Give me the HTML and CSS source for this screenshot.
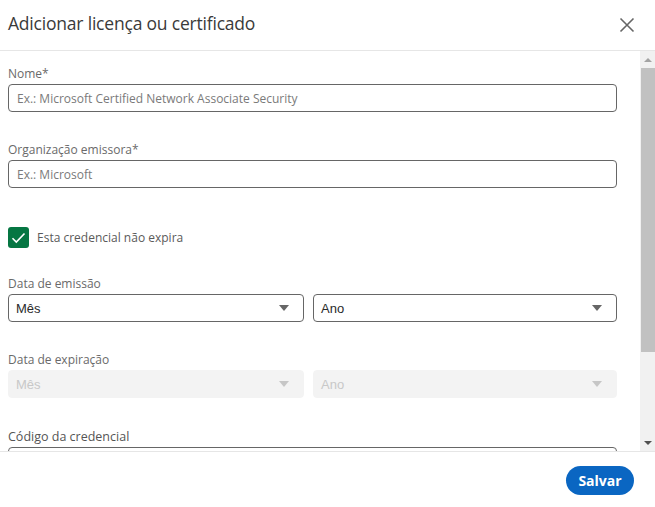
FILE: index.html
```html
<!DOCTYPE html>
<html lang="pt">
<head>
<meta charset="utf-8">
<title>Adicionar licença ou certificado</title>
<link rel="stylesheet" href="styles.css">
</head>
<body>
<div class="dialog">
  <header class="header">
    <h1 class="title">Adicionar licença ou certificado</h1>
    <button class="close" aria-label="Fechar">
      <svg width="16" height="16" viewBox="0 0 16 16"><path d="M1.5 1.5 L14.5 14.5 M14.5 1.5 L1.5 14.5" stroke="#666" stroke-width="1.6" fill="none"/></svg>
    </button>
  </header>
  <div class="body">
    <div class="content">
      <div class="field">
        <label class="label">Nome*</label>
        <div class="input placeholder">Ex.: Microsoft Certified Network Associate Security</div>
      </div>
      <div class="field">
        <label class="label">Organização emissora*</label>
        <div class="input placeholder">Ex.: Microsoft</div>
      </div>
      <div class="check-row">
        <span class="checkbox">
          <svg width="15" height="12" viewBox="0 0 15 12"><path d="M1.5 6.2 L5.3 10 L13.5 1.5" stroke="#fff" stroke-width="1.6" fill="none"/></svg>
        </span>
        <span class="check-label">Esta credencial não expira</span>
      </div>
      <div class="field">
        <label class="label">Data de emissão</label>
        <div class="pair">
          <div class="select"><span>Mês</span><i class="caret"></i></div>
          <div class="select"><span>Ano</span><i class="caret"></i></div>
        </div>
      </div>
      <div class="field">
        <label class="label">Data de expiração</label>
        <div class="pair">
          <div class="select disabled"><span>Mês</span><i class="caret"></i></div>
          <div class="select disabled"><span>Ano</span><i class="caret"></i></div>
        </div>
      </div>
      <div class="field last">
        <label class="label code">Código da credencial</label>
        <div class="input"></div>
      </div>
    </div>
    <div class="scrollbar">
      <div class="sb-btn"><i class="sb-up"></i></div>
      <div class="sb-thumb"></div>
      <div class="sb-track"></div>
      <div class="sb-btn"><i class="sb-down"></i></div>
    </div>
  </div>
  <footer class="footer">
    <button class="save">Salvar</button>
  </footer>
</div>
</body>
</html>
```

FILE: styles.css
```css
* { box-sizing: border-box; }
html, body { margin: 0; padding: 0; background: #fff; }
body { font-family: "Open Sans", "Noto Sans", sans-serif; color: #333; }

.dialog {
  width: 655px;
  height: 507px;
  display: flex;
  flex-direction: column;
  overflow: hidden;
}

.header {
  height: 51px;
  flex: none;
  display: flex;
  align-items: center;
  justify-content: space-between;
  padding: 0 20px 0 8px;
  border-bottom: 1px solid #e6e6e6;
}
.title {
  margin: 0 0 4px 0;
  font-size: 17.5px;
  font-weight: 400;
  color: #3a3a3a;
  letter-spacing: -0.2px;
}
.close {
  border: 0;
  background: none;
  padding: 0;
  width: 16px;
  height: 16px;
  display: flex;
}

.body {
  flex: none;
  height: 400px;
  display: flex;
}
.content {
  flex: 1;
  overflow: hidden;
  padding: 15px 23px 0 8px;
}

.field { margin-bottom: 30px; }
.field.last { margin-top: 31px; }
.label {
  display: block;
  font-size: 12px;
  line-height: 16px;
  color: #6a6a6a;
  margin-bottom: 2px;
}
.label.code { font-size: 12.5px; color: #555; }

.input {
  height: 28px;
  border: 1px solid #666;
  border-radius: 4px;
  padding: 0 8px;
  display: flex;
  align-items: center;
  font-size: 12px;
}
.placeholder { color: #7a7a7a; }

.check-row {
  display: flex;
  align-items: center;
  gap: 8px;
  margin: 39px 0 28px 0;
  height: 21px;
}
.checkbox {
  width: 21px;
  height: 21px;
  border-radius: 3px;
  background: #057642;
  display: flex;
  align-items: center;
  justify-content: center;
}
.check-label { font-size: 12px; color: #5a5a5a; }

.pair {
  display: grid;
  grid-template-columns: 296px 1fr;
  gap: 9px;
}
.select {
  height: 28px;
  border: 1px solid #666;
  border-radius: 4px;
  display: flex;
  align-items: center;
  justify-content: space-between;
  padding: 0 14px 0 7px;
  font-family: "Liberation Sans", Arial, sans-serif;
  font-size: 13px;
  color: #2a2a2a;
}
.select.disabled {
  border-color: #f3f3f3;
  background: #f3f3f3;
  color: #c8c8c8;
}
.caret {
  width: 0;
  height: 0;
  border-left: 5.5px solid transparent;
  border-right: 5.5px solid transparent;
  border-top: 6px solid #666;
}
.select.disabled .caret { border-top-color: #c6c6c6; }

.scrollbar {
  width: 15px;
  flex: none;
  background: #f1f1f1;
  display: flex;
  flex-direction: column;
  align-items: flex-end;
}
.sb-btn {
  height: 17px;
  width: 15px;
  display: flex;
  align-items: center;
  justify-content: center;
}
.sb-up {
  width: 0; height: 0;
  border-left: 4px solid transparent;
  border-right: 4px solid transparent;
  border-bottom: 4px solid #a3a3a3;
}
.sb-down {
  width: 0; height: 0;
  border-left: 4px solid transparent;
  border-right: 4px solid transparent;
  border-top: 4px solid #505050;
}
.sb-thumb {
  width: 14px;
  height: 284px;
  background: #c1c1c1;
}
.sb-track { flex: 1; }

.footer {
  flex: 1;
  border-top: 1px solid #e6e6e6;
  display: flex;
  justify-content: flex-end;
  align-items: flex-start;
  padding: 14px 21px 0 0;
}
.save {
  height: 29px;
  width: 68px;
  border: 0;
  border-radius: 15px;
  background: #0a66c2;
  color: #fff;
  font-family: "Open Sans", "Noto Sans", sans-serif;
  font-weight: 700;
  font-size: 14px;
  padding: 0;
}
```
